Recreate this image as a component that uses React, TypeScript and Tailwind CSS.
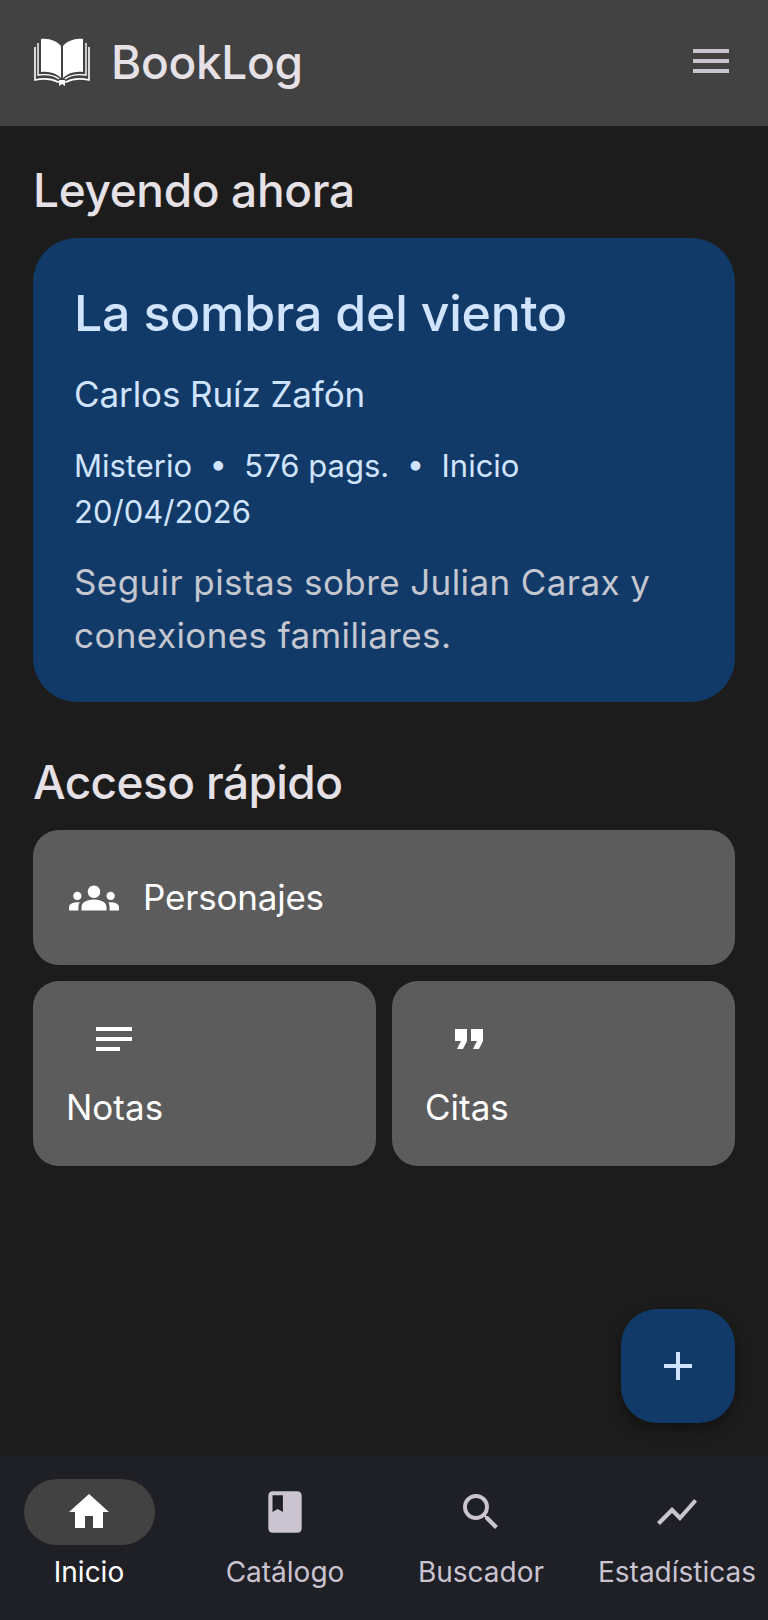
import { MdAdd, MdBook, MdFormatQuote, MdGroups, MdHome, MdMenu, MdNotes, MdSearch, MdShowChart } from "react-icons/md"
import type { IconType } from "react-icons"

const navItems: { label: string; icon: IconType; active?: boolean }[] = [
    { label: "Inicio", icon: MdHome, active: true },
    { label: "Catálogo", icon: MdBook },
    { label: "Buscador", icon: MdSearch },
    { label: "Estadísticas", icon: MdShowChart }
]

const BookLogo = () => (
    <svg width="56" height="48" viewBox="0 0 56 48" fill="none" className="-mt-[3px] text-white">
        <path d="M27 8C23 3 15 0 7 1V34C15 33 22 35 27 40Z" fill="currentColor" />
        <path d="M29 8C33 3 41 0 49 1V34C41 33 34 35 29 40Z" fill="currentColor" />
        <path d="M4 5V37C12 36 20 37 25 41M52 5V37C44 36 36 37 31 41" stroke="currentColor" strokeWidth="1.4" />
        <path d="M1 9V42C10 40 18 41 24 44H32C38 41 46 40 55 42V9" stroke="currentColor" strokeWidth="1.6" />
        <path d="M25 42H31V48L28 46L25 48Z" fill="currentColor" />
    </svg>
)

function App() {
    return (
        <div className="relative flex h-[1620px] w-[768px] flex-col overflow-hidden bg-[#1c1c1c] font-['Inter',sans-serif] text-[#e6e1e6]">
            <header className="flex h-[126px] shrink-0 items-center justify-between bg-[#424242] pr-[33px] pl-[34px]">
                <div className="flex items-center gap-[21px]">
                    <BookLogo />
                    <h1 className="-mt-[2px] text-[46px] leading-none font-medium tracking-[-0.3px]">BookLog</h1>
                </div>
                <MdMenu size={48} className="-mt-[4px] text-[#cac4d0]" />
            </header>

            <main className="flex flex-1 flex-col px-[33px] pt-[39px]">
                <h2 className="text-[46px] leading-[50px] font-medium tracking-[-0.35px]">Leyendo ahora</h2>

                <section className="mt-[23px] h-[464px] rounded-[44px] bg-[#123a68] px-[41px] pt-[46px] text-[#d1e4ff]">
                    <h3 className="text-[50px] leading-[58px] font-medium tracking-[-0.2px]">La sombra del viento</h3>
                    <p className="mt-[30px] text-[35px] leading-[44px] tracking-[-0.1px]">Carlos Ruíz Zafón</p>
                    <p className="mt-[27px] text-[31px] leading-[46px]">Misterio &nbsp;•&nbsp; 576 pags. &nbsp;•&nbsp; Inicio 20/04/2026</p>
                    <p className="mt-[21px] text-[35px] leading-[53px] tracking-[0.4px] text-[#c4c6d0]">Seguir pistas sobre Julian Carax y conexiones familiares.</p>
                </section>

                <h2 className="mt-[55px] text-[46px] leading-[50px] font-medium tracking-[-0.6px]">Acceso rápido</h2>

                <div className="mt-[23px] flex h-[135px] items-center gap-[24px] rounded-[26px] bg-[#5c5c5c] px-[36px] text-white">
                    <MdGroups size={50} />
                    <span className="text-[35px] tracking-[-0.2px]">Personajes</span>
                </div>

                <div className="mt-[16px] grid grid-cols-2 gap-[16px]">
                    <div className="h-[185px] rounded-[26px] bg-[#5c5c5c] pt-[34px] pl-[33px] text-white">
                        <MdNotes size={48} className="ml-[24px]" />
                        <p className="mt-[22px] text-[35px] leading-[44px]">Notas</p>
                    </div>
                    <div className="h-[185px] rounded-[26px] bg-[#5c5c5c] pt-[34px] pl-[33px] text-white">
                        <MdFormatQuote size={48} className="ml-[20px]" />
                        <p className="mt-[22px] text-[35px] leading-[44px]">Citas</p>
                    </div>
                </div>
            </main>

            <button className="absolute right-[33px] bottom-[197px] flex h-[114px] w-[114px] items-center justify-center rounded-[36px] bg-[#123a68] text-[#d1e4ff] shadow-[0_6px_14px_rgba(0,0,0,0.35)]">
                <MdAdd size={48} />
            </button>

            <nav className="-ml-[9px] grid h-[164px] w-[784px] shrink-0 grid-cols-4 bg-[#1f1f26] pt-[23px]">
                {navItems.map((item) => (
                    <div key={item.label} className="flex flex-col items-center">
                        <div className={`flex h-[66px] w-[131px] items-center justify-center rounded-full ${item.active ? "bg-[#424242] text-white" : "text-[#cac4d0]"}`}>
                            <item.icon size={item.label === "Catálogo" ? 50 : 48} />
                        </div>
                        <span className={`mt-[9px] text-[28px] leading-[36px] whitespace-nowrap ${item.active ? "text-white" : "text-[#cac4d0]"}`}>{item.label}</span>
                    </div>
                ))}
            </nav>
        </div>
    )
}

export default App
